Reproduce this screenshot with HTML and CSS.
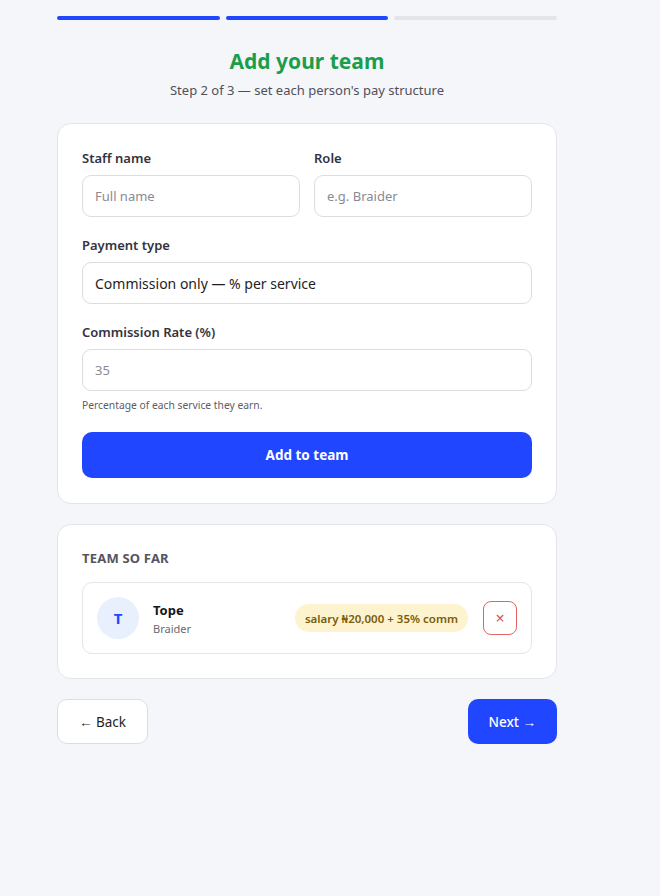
FILE: index.html
```html
<!DOCTYPE html>
<html lang="en">
<head>
<meta charset="utf-8">
<title>Add your team</title>
<link rel="stylesheet" href="styles.css">
</head>
<body>
<div class="wrap">
  <div class="progress">
    <span class="bar on"></span>
    <span class="bar on"></span>
    <span class="bar"></span>
  </div>
  <h1 class="title">Add your team</h1>
  <p class="subtitle">Step 2 of 3 — set each person's pay structure</p>

  <section class="card form">
    <div class="row2">
      <div class="field">
        <label class="label">Staff name</label>
        <div class="input placeholder">Full name</div>
      </div>
      <div class="field">
        <label class="label">Role</label>
        <div class="input placeholder">e.g. Braider</div>
      </div>
    </div>
    <div class="field">
      <label class="label">Payment type</label>
      <div class="input select">Commission only — % per service</div>
    </div>
    <div class="field">
      <label class="label">Commission Rate (%)</label>
      <div class="input placeholder">35</div>
      <div class="help">Percentage of each service they earn.</div>
    </div>
    <button class="btn-primary">Add to team</button>
  </section>

  <section class="card team">
    <h2 class="section-title">TEAM SO FAR</h2>
    <div class="member">
      <div class="avatar">T</div>
      <div class="who">
        <div class="name">Tope</div>
        <div class="role">Braider</div>
      </div>
      <span class="badge">salary ₦20,000 + 35% comm</span>
      <button class="remove">×</button>
    </div>
  </section>

  <div class="nav">
    <button class="btn-back">← Back</button>
    <button class="btn-next">Next →</button>
  </div>
</div>
</body>
</html>
```
FILE: styles.css
```css
* { box-sizing: border-box; }
body {
  margin: 0;
  background: #f5f6fa;
  font-family: "Noto Sans", "Open Sans", sans-serif;
  color: #222;
}
.wrap {
  width: 500px;
  margin-left: 57px;
  padding-top: 16px;
}
.progress {
  display: flex;
  gap: 6px;
}
.bar {
  flex: 1;
  height: 4px;
  border-radius: 2px;
  background: #e4e5ea;
}
.bar.on { background: #2146ff; }
.title {
  margin: 26px 0 0;
  text-align: center;
  font-size: 21px;
  line-height: 30px;
  font-weight: 700;
  color: #1b9e4b;
}
.subtitle {
  margin: 5px 0 0;
  text-align: center;
  font-size: 13px;
  line-height: 18px;
  color: #50505a;
}
.card {
  background: #fff;
  border: 1px solid #e4e5ea;
  border-radius: 14px;
  padding: 24px 24px;
}
.form {
  margin-top: 24px;
  padding-top: 25px;
  padding-bottom: 25px;
  display: flex;
  flex-direction: column;
  gap: 19px;
}
.row2 {
  display: grid;
  grid-template-columns: 1fr 1fr;
  gap: 14px;
}
.field {
  display: flex;
  flex-direction: column;
}
.label {
  font-size: 13px;
  line-height: 18px;
  font-weight: 600;
  color: #333340;
  margin-bottom: 8px;
}
.input {
  height: 42px;
  border: 1px solid #dcdde2;
  border-radius: 9px;
  background: #fff;
  padding: 0 12px;
  display: flex;
  align-items: center;
  font-size: 13px;
}
.input.placeholder { color: #8a8a94; }
.input.select { font-size: 14px; color: #1e1e24; }
.help {
  margin-top: 7px;
  font-size: 10.3px;
  line-height: 14px;
  color: #5c5c66;
}
.btn-primary {
  margin-top: 1px;
  height: 46px;
  border: none;
  border-radius: 10px;
  background: #2146ff;
  color: #fff;
  font-family: inherit;
  font-size: 13.5px;
  font-weight: 700;
}
.team {
  margin-top: 20px;
  padding-top: 24px;
}
.section-title {
  margin: 0 0 15px;
  font-size: 13px;
  line-height: 18px;
  font-weight: 700;
  color: #55555f;
  letter-spacing: 0.2px;
}
.member {
  display: flex;
  align-items: center;
  border: 1px solid #e4e5ea;
  border-radius: 10px;
  padding: 14px 14px;
  height: 72px;
}
.avatar {
  width: 42px;
  height: 42px;
  border-radius: 50%;
  background: #e8effd;
  color: #2146ff;
  font-weight: 700;
  font-size: 15px;
  display: flex;
  align-items: center;
  justify-content: center;
}
.who {
  margin-left: 14px;
  flex: 1;
}
.name {
  font-size: 13px;
  line-height: 18px;
  font-weight: 700;
  color: #15151a;
}
.role {
  margin-top: 2px;
  font-size: 11px;
  line-height: 15px;
  color: #6a6a74;
}
.badge {
  height: 28px;
  padding: 0 10px;
  border-radius: 14px;
  background: #fdf3cf;
  color: #7a5c0c;
  font-size: 11.5px;
  font-weight: 600;
  display: flex;
  align-items: center;
}
.remove {
  margin-left: 15px;
  width: 34px;
  height: 34px;
  border: 1px solid #e06666;
  border-radius: 8px;
  background: #fff;
  color: #e05555;
  font-family: inherit;
  font-size: 16px;
  line-height: 1;
  padding: 0;
}
.nav {
  margin-top: 20px;
  display: flex;
  justify-content: space-between;
}
.btn-back, .btn-next {
  height: 45px;
  border-radius: 10px;
  font-family: inherit;
  font-size: 13.5px;
  padding: 0 21px;
}
.btn-back {
  background: #fff;
  border: 1px solid #dcdde2;
  color: #1e1e24;
}
.btn-next {
  background: #2146ff;
  border: none;
  color: #fff;
  font-weight: 500;
}
```
